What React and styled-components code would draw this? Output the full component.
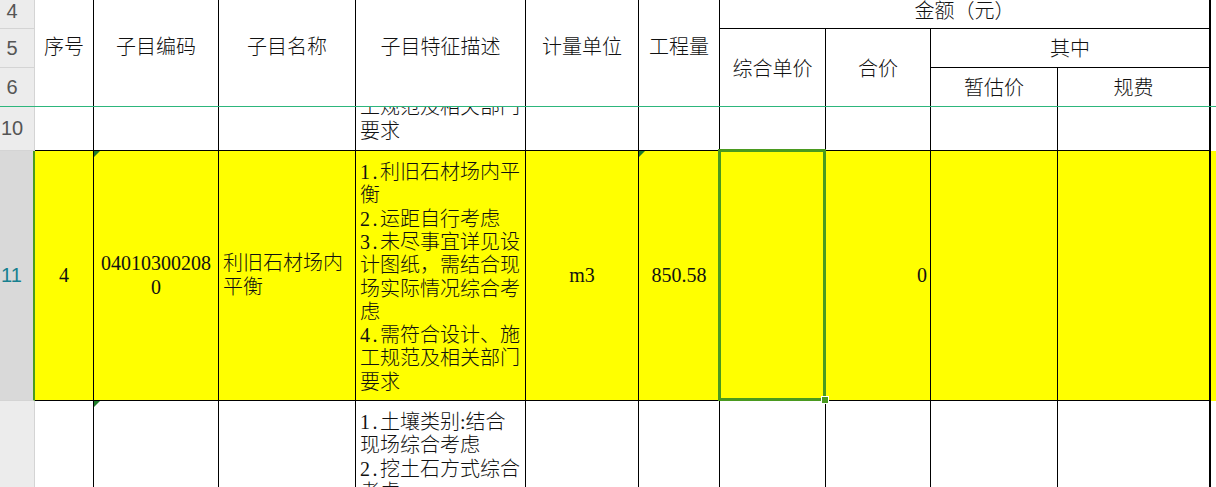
import React from 'react';
import styled, { createGlobalStyle } from 'styled-components';

const COLS = '35px 59px 125px 137px 170px 113px 81px 106px 105px 127px 153px 5px';

const Global = createGlobalStyle`
  html, body { margin: 0; padding: 0; background: #fff; overflow: hidden; }
  body { width: 1216px; height: 487px; }
`;

const Sheet = styled.div`
  width: 1216px;
  height: 487px;
  overflow: hidden;
  background: #fff;
  font-family: "Liberation Serif", "Noto Sans CJK SC", serif;
  font-size: 20px;
  font-weight: 300;
  color: #111;
`;

const HeaderGrid = styled.div`
  display: grid;
  grid-template-columns: ${COLS};
  grid-template-rows: 29px 39px 38px;
  border-bottom: 1px solid #2db67c;
`;

const BodyGrid = styled.div`
  display: grid;
  grid-template-columns: ${COLS};
  grid-template-rows: 44px 250px 86px;
`;

const justify = { top: 'flex-start', bottom: 'flex-end', center: 'center' };
const alignX = { left: 'flex-start', right: 'flex-end', center: 'center' };

const Cell = styled.div`
  box-sizing: border-box;
  position: relative;
  overflow: ${(p) => (p.$visible ? 'visible' : 'hidden')};
  z-index: ${(p) => (p.$visible ? 2 : 'auto')};
  grid-column: ${(p) => p.$col};
  grid-row: ${(p) => p.$row};
  display: flex;
  flex-direction: column;
  justify-content: ${(p) => justify[p.$v || 'center']};
  align-items: ${(p) => alignX[p.$h || 'center']};
  text-align: ${(p) => p.$h || 'center'};
  padding: ${(p) => p.$pad || '0 4px'};
  line-height: 23.3px;
  background: ${(p) => (p.$yellow ? '#ffff00' : '#fff')};
  border-right: ${(p) => (p.$thick ? '2px' : '1px')} solid #000;
  border-bottom: ${(p) => (p.$noBottom ? 'none' : '1px solid #000')};
`;

const Filler = styled.div`
  grid-column: ${(p) => p.$col};
  grid-row: ${(p) => p.$row};
  background: ${(p) => (p.$yellow ? '#ffff00' : '#fff')};
`;

const RowHead = styled.div`
  box-sizing: border-box;
  grid-column: 1;
  grid-row: ${(p) => p.$row};
  display: flex;
  align-items: ${(p) => p.$v || 'center'};
  justify-content: center;
  padding: ${(p) => p.$pad || '0 10px 0 0'};
  background: ${(p) => (p.$active ? '#d9d9d9' : '#ececec')};
  border-right: ${(p) => (p.$active ? '2px solid #4a9a1f' : '1px solid #d4d4d4')};
  border-bottom: ${(p) => (p.$noBottom ? 'none' : '1px solid #d4d4d4')};
  font-family: "Liberation Sans", Arial, sans-serif;
  font-weight: 400;
  font-size: 20px;
  color: ${(p) => (p.$active ? '#17808f' : '#555')};
`;

const Text = styled.div`
  flex-shrink: 0;
`;

const Line = styled.span`
  display: block;
  white-space: nowrap;
`;

const Prefix = styled.span`
  letter-spacing: 2.5px;
`;

const Flag = styled.span`
  position: absolute;
  top: 0;
  left: 0;
  width: 0;
  height: 0;
  border-top: 6px solid #1f7d2b;
  border-right: 6px solid transparent;
`;

const Selection = styled.div`
  position: absolute;
  top: -2px;
  left: -2px;
  right: -1px;
  bottom: -1px;
  border: 3px solid #4a9a1f;
  pointer-events: none;
`;

const Handle = styled.span`
  position: absolute;
  right: -6px;
  bottom: -6px;
  width: 6px;
  height: 6px;
  background: #4a9a1f;
  border: 1px solid #fff;
`;

const renderLine = (l) => {
  const m = l.match(/^(\d\.)(.*)$/);
  if (!m) return l;
  return (
    <>
      <Prefix>{m[1]}</Prefix>
      {m[2]}
    </>
  );
};

const Lines = ({ lines }) => (
  <Text>
    {lines.map((l, i) => (
      <Line key={i}>{renderLine(l)}</Line>
    ))}
  </Text>
);

const descRow11 = [
  '1.利旧石材场内平',
  '衡',
  '2.运距自行考虑',
  '3.未尽事宜详见设',
  '计图纸，需结合现',
  '场实际情况综合考',
  '虑',
  '4.需符合设计、施',
  '工规范及相关部门',
  '要求',
];

const descRow10 = ['4.需符合设计、施', '工规范及相关部门', '要求'];

const descRow12 = ['1.土壤类别:结合', '现场综合考虑', '2.挖土石方式综合', '考虑'];

export default function App() {
  return (
    <>
      <Global />
      <Sheet>
        <HeaderGrid>
          <RowHead $row={1} $v="flex-end" $pad="0 10px 5px 0">4</RowHead>
          <RowHead $row={2}>5</RowHead>
          <RowHead $row={3} $noBottom>6</RowHead>

          <Cell $col={2} $row="1 / 4" $noBottom $pad="0 4px 10px">序号</Cell>
          <Cell $col={3} $row="1 / 4" $noBottom $pad="0 4px 10px">子目编码</Cell>
          <Cell $col={4} $row="1 / 4" $noBottom $pad="0 4px 10px">子目名称</Cell>
          <Cell $col={5} $row="1 / 4" $noBottom $pad="0 4px 10px">子目特征描述</Cell>
          <Cell $col={6} $row="1 / 4" $noBottom $pad="0 4px 10px">计量单位</Cell>
          <Cell $col={7} $row="1 / 4" $noBottom $pad="0 4px 10px">工程量</Cell>

          <Cell $col="8 / 12" $row={1} $thick $pad="0 4px 5px">金额（元）</Cell>
          <Cell $col={8} $row="2 / 4" $noBottom $pad="5px 4px 0">综合单价</Cell>
          <Cell $col={9} $row="2 / 4" $noBottom $pad="5px 4px 0">合价</Cell>
          <Cell $col="10 / 12" $row={2} $thick $pad="3px 4px 0">其中</Cell>
          <Cell $col={10} $row={3} $noBottom $pad="4px 4px 0">暂估价</Cell>
          <Cell $col={11} $row={3} $noBottom $thick $pad="4px 4px 0">规费</Cell>
          <Filler $col={12} $row="1 / 4" />
        </HeaderGrid>

        <BodyGrid>
          {/* row 10 */}
          <RowHead $row={1}>10</RowHead>
          <Cell $col={2} $row={1} />
          <Cell $col={3} $row={1} />
          <Cell $col={4} $row={1} />
          <Cell $col={5} $row={1} $h="left" $v="bottom" $pad="0 4px 7px">
            <Lines lines={descRow10} />
          </Cell>
          <Cell $col={6} $row={1} />
          <Cell $col={7} $row={1} />
          <Cell $col={8} $row={1} />
          <Cell $col={9} $row={1} />
          <Cell $col={10} $row={1} />
          <Cell $col={11} $row={1} $thick />
          <Filler $col={12} $row={1} />

          {/* row 11 */}
          <RowHead $row={2} $active>11</RowHead>
          <Cell $col={2} $row={2} $yellow>4</Cell>
          <Cell $col={3} $row={2} $yellow>
            <Flag />
            <Lines lines={['04010300208', '0']} />
          </Cell>
          <Cell $col={4} $row={2} $yellow $h="left">
            <Lines lines={['利旧石材场内', '平衡']} />
          </Cell>
          <Cell $col={5} $row={2} $yellow $h="left" $pad="4px 4px 0">
            <Lines lines={descRow11} />
          </Cell>
          <Cell $col={6} $row={2} $yellow>m3</Cell>
          <Cell $col={7} $row={2} $yellow>
            <Flag />
            850.58
          </Cell>
          <Cell $col={8} $row={2} $yellow $visible>
            <Selection>
              <Handle />
            </Selection>
          </Cell>
          <Cell $col={9} $row={2} $yellow $h="right" $pad="0 3px 0 4px">0</Cell>
          <Cell $col={10} $row={2} $yellow />
          <Cell $col={11} $row={2} $yellow $thick />
          <Filler $col={12} $row={2} $yellow />

          {/* row 12 */}
          <RowHead $row={3} $noBottom />
          <Cell $col={2} $row={3} $noBottom />
          <Cell $col={3} $row={3} $noBottom>
            <Flag />
          </Cell>
          <Cell $col={4} $row={3} $noBottom />
          <Cell $col={5} $row={3} $noBottom $h="left" $v="top" $pad="10px 4px 0">
            <Lines lines={descRow12} />
          </Cell>
          <Cell $col={6} $row={3} $noBottom />
          <Cell $col={7} $row={3} $noBottom />
          <Cell $col={8} $row={3} $noBottom />
          <Cell $col={9} $row={3} $noBottom />
          <Cell $col={10} $row={3} $noBottom />
          <Cell $col={11} $row={3} $noBottom $thick />
          <Filler $col={12} $row={3} />
        </BodyGrid>
      </Sheet>
    </>
  );
}
